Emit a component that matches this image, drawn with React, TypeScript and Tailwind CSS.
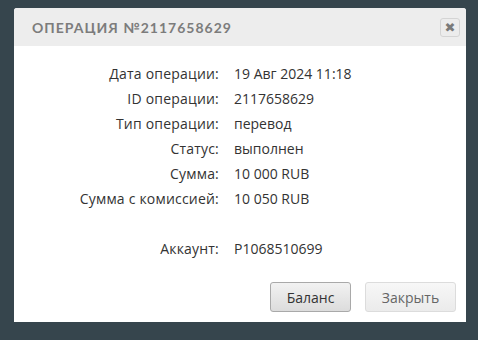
const rows: [string, string][] = [
  ["Дата операции:", "19 Авг 2024 11:18"],
  ["ID операции:", "2117658629"],
  ["Тип операции:", "перевод"],
  ["Статус:", "выполнен"],
  ["Сумма:", "10 000 RUB"],
  ["Сумма с комиссией:", "10 050 RUB"],
  ["", ""],
  ["Аккаунт:", "P1068510699"],
];

export default function App() {
  return (
    <div className="h-[340px] w-[478px] overflow-hidden bg-[#36454d] pl-[14px] pt-[8px] font-['Open_Sans',sans-serif]">
      <div className="flex h-[314px] w-[452px] flex-col overflow-hidden rounded-t-[3px] bg-white">
        <div className="flex h-[38px] items-center justify-between bg-[#ededed] pl-[18px] pr-[6px]">
          <h2 className="font-['Lato',sans-serif] text-[14px] font-bold tracking-[1px] text-[#7c7c7c]">
            ОПЕРАЦИЯ №2117658629
          </h2>
          <button className="grid h-[19px] w-[20px] place-items-center rounded-[3px] border border-[#d4d4d4] bg-[#ececec] font-['DejaVu_Sans',sans-serif] text-[13px] leading-none text-[#7a7a7a]">
            ✖
          </button>
        </div>
        <div className="grid grid-cols-[205px_1fr] gap-x-[15px] pt-[15px] text-[14px] text-[#333]">
          {rows.map(([label, value], i) => (
            <div key={i} className="contents">
              <span className="h-[25px] text-right leading-[25px] tracking-[0.2px]">{label}</span>
              <span className="h-[25px] leading-[25px]">{value}</span>
            </div>
          ))}
        </div>
        <div className="mt-auto flex justify-end gap-[14px] pb-[10px] pr-[10px]">
          <button className="h-[30px] w-[81px] rounded-[3px] border border-[#a9a9a9] bg-gradient-to-b from-[#f2f2f2] to-[#dcdcdc] text-[14px] text-[#333]">
            Баланс
          </button>
          <button className="h-[30px] w-[91px] rounded-[3px] border border-[#dcdcdc] bg-gradient-to-b from-[#f7f7f7] to-[#ebebeb] text-[14px] text-[#666]">
            Закрыть
          </button>
        </div>
      </div>
    </div>
  );
}
